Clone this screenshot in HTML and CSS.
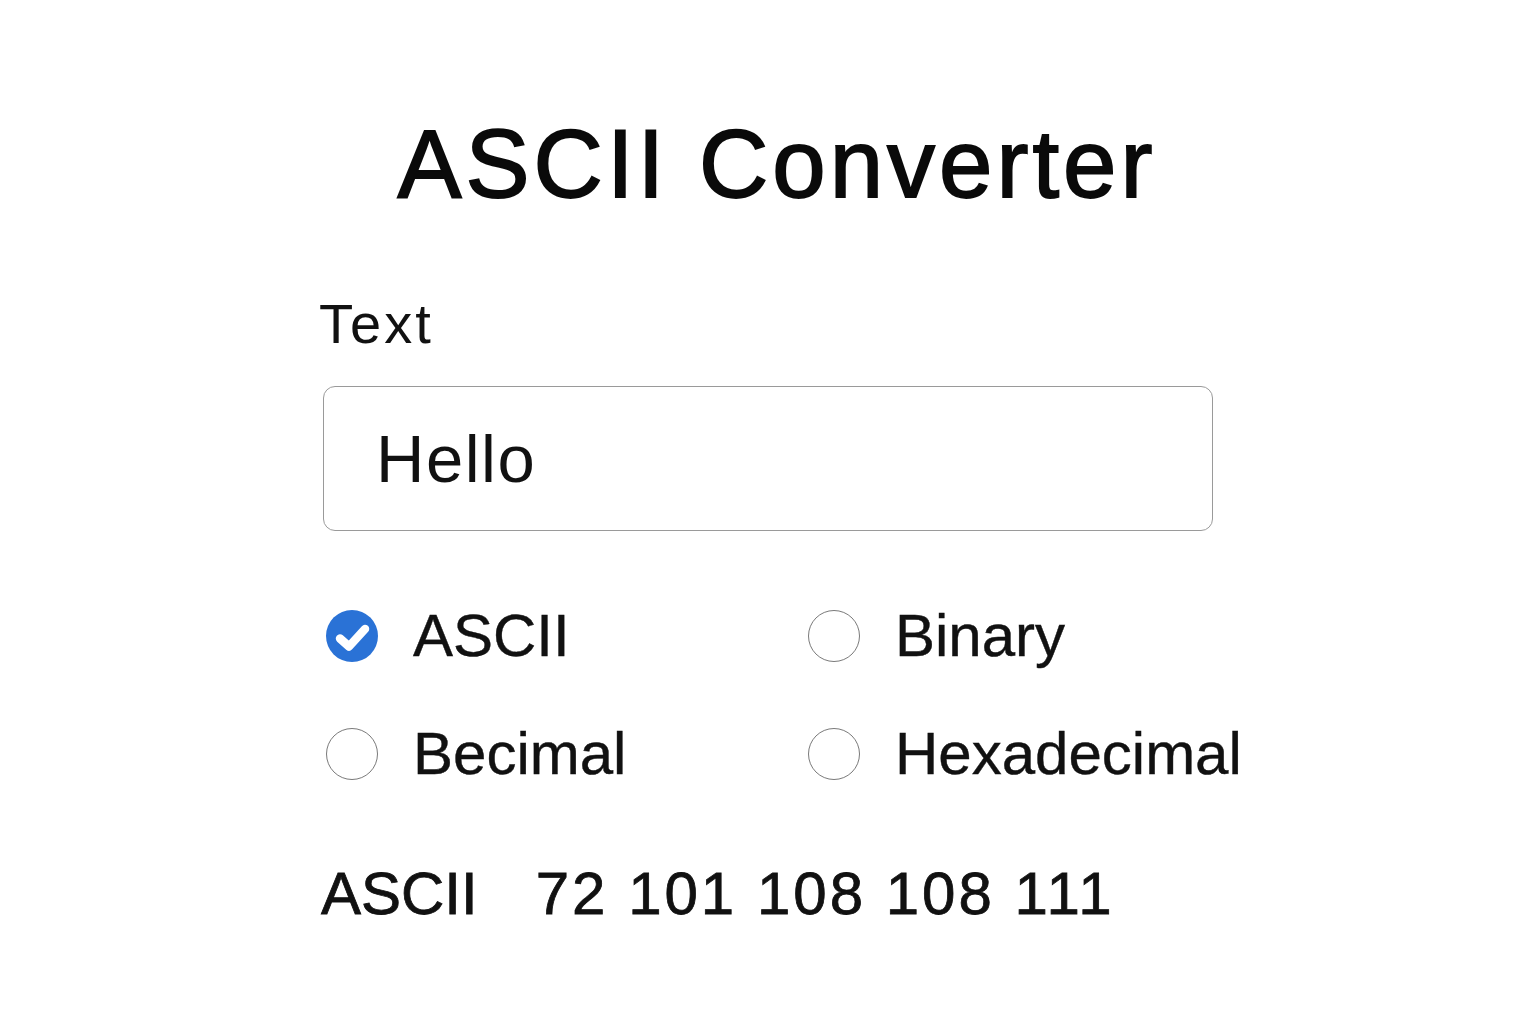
FILE: index.html
```html
<!DOCTYPE html>
<html lang="en">
<head>
  <meta charset="UTF-8" />
  <title>ASCII Converter</title>
  <link rel="stylesheet" href="styles.css">
</head>
<body>
  <div class="container">
    <h1 class="title">ASCII Converter</h1>

    <label class="field-label" for="inputText">Text</label>
    <input id="inputText" class="text-input" type="text" value="Hello">

    <div class="options">
      <label class="option">
        <span class="dot checked">
          <svg viewBox="0 0 52 52" width="52" height="52">
            <circle cx="26" cy="26" r="26" fill="#2a72d6"/>
            <path d="M14 28.5 L23 36.5 L39 19" fill="none" stroke="#fff" stroke-width="8.5" stroke-linecap="round" stroke-linejoin="round"/>
          </svg>
        </span>
        <span>ASCII</span>
      </label>
      <label class="option">
        <span class="dot"></span>
        <span>Binary</span>
      </label>
      <label class="option">
        <span class="dot"></span>
        <span>Becimal</span>
      </label>
      <label class="option">
        <span class="dot"></span>
        <span>Hexadecimal</span>
      </label>
    </div>

    <div class="result">
      <span class="result-label">ASCII</span>
      <span class="result-value">72 101 108 108 111</span>
    </div>
  </div>
</body>
</html>
```

FILE: styles.css
```css
body {
  margin: 0;
  background: #fff;
  color: #111;
  font-family: 'Liberation Sans', Arial, sans-serif;
}

.container {
  width: 890px;
  margin: 0 auto;
  display: flex;
  flex-direction: column;
}

.title {
  margin: 116px 0 84px 0;
  padding-left: 18px;
  font-size: 96px;
  line-height: 96px;
  font-weight: 400;
  letter-spacing: 4px;
  text-align: center;
  color: #0a0a0a;
  -webkit-text-stroke: 1.8px #0a0a0a;
}

.field-label {
  font-size: 56px;
  line-height: 56px;
  margin-left: -4px;
  letter-spacing: 3px;
}

.text-input {
  margin-top: 34px;
  height: 145px;
  box-sizing: border-box;
  width: 100%;
  padding: 0 0 0 52px;
  font-family: 'Liberation Sans', Arial, sans-serif;
  font-size: 67px;
  letter-spacing: 1.5px;
  color: #111;
  border: 1.5px solid #9a9a9a;
  border-radius: 12px;
  outline: none;
}

.options {
  margin-top: 75px;
  display: grid;
  grid-template-columns: 482px auto;
  row-gap: 58px;
}

.option {
  display: flex;
  align-items: center;
  gap: 35px;
  font-size: 60px;
  line-height: 60px;
  height: 60px;
  padding-left: 3px;
  -webkit-text-stroke: 0.4px #111;
}

.dot {
  width: 52px;
  height: 52px;
  border-radius: 50%;
  border: 1.5px solid #7a7a7a;
  box-sizing: border-box;
  flex-shrink: 0;
}

.dot.checked {
  border: none;
}

.dot svg {
  display: block;
}

.result {
  margin-top: 80px;
  display: flex;
  gap: 58px;
  font-size: 60px;
  line-height: 60px;
  margin-left: -2px;
  -webkit-text-stroke: 0.8px #111;
}

.result-value {
  letter-spacing: 3px;
}
```
